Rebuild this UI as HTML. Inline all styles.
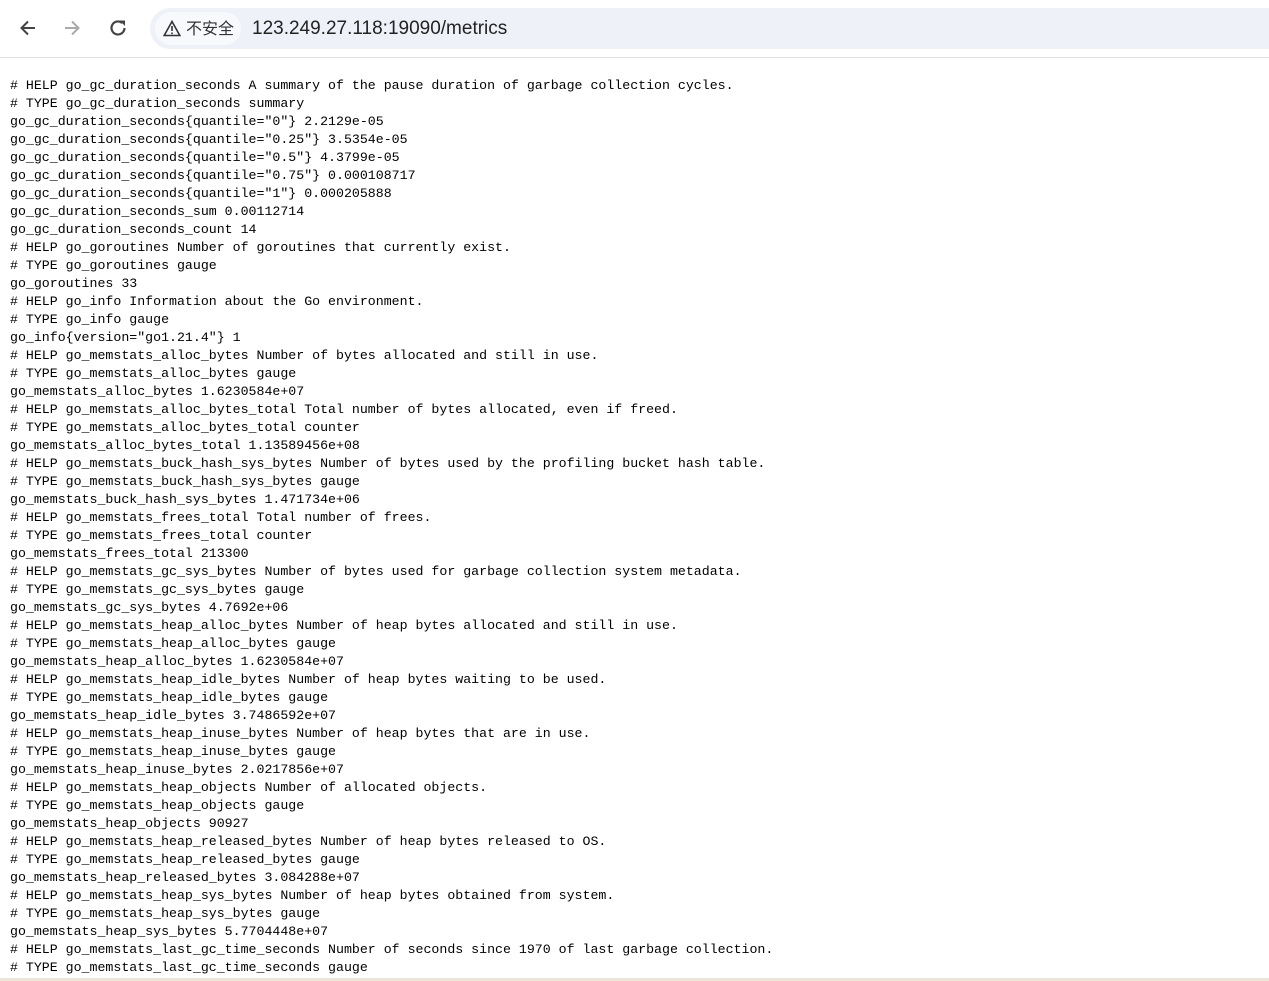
<!DOCTYPE html>
<html><head><meta charset="utf-8"><style>
html,body{margin:0;padding:0;width:1269px;height:981px;overflow:hidden;background:#fff;}
.bar{position:absolute;left:0;top:0;width:1269px;height:57px;background:#fff;border-bottom:1px solid #e3e3e3;}
.omni{position:absolute;left:150px;top:8px;width:1140px;height:41px;border-radius:21px;background:#eef1f8;}
.chip{position:absolute;left:155px;top:12px;width:86px;height:33px;border-radius:17px;background:#f8f9fd;font:16px "Liberation Sans","Noto Sans CJK SC",sans-serif;color:#333;line-height:35px;}
.url{position:absolute;left:252px;top:18px;font:19px "Liberation Sans",sans-serif;color:#222;line-height:22px;}
.content{position:absolute;left:0;top:58px;width:1269px;height:920px;overflow:hidden;}
pre{margin:0;position:absolute;left:10px;top:19px;font:13.25px/18px "Liberation Mono","Noto Sans CJK SC",monospace;color:#000;}
.bot{position:absolute;left:0;top:978px;width:1269px;height:3px;background:#ede6d8;}
</style></head><body>
<div class="bar">
<svg style="position:absolute;left:18px;top:18px" width="20" height="20" viewBox="0 0 20 20"><path d="M17 10H4M10 3.5L3.5 10 10 16.5" fill="none" stroke="#444" stroke-width="2"/></svg>
<svg style="position:absolute;left:62px;top:18px" width="20" height="20" viewBox="0 0 20 20"><path d="M3 10H16M10 3.5L16.5 10 10 16.5" fill="none" stroke="#aaa" stroke-width="2"/></svg>
<svg style="position:absolute;left:107px;top:17px" width="22" height="22" viewBox="0 0 22 22"><path d="M17.5 11A6.5 6.5 0 1 1 15.2 6" fill="none" stroke="#444" stroke-width="2.2"/><path d="M12.5 3.5H18V9z" fill="#444"/></svg>
<div class="omni"></div>
<div class="chip"><svg style="position:absolute;left:8px;top:8px" width="18" height="17" viewBox="0 0 18 17"><path d="M9 1.5L16.8 15.5H1.2z" fill="none" stroke="#333" stroke-width="1.6"/><path d="M9 6v5M9 12.5v1.6" stroke="#333" stroke-width="1.6"/></svg><span style="position:absolute;left:31px;top:0">不安全</span></div>
<div class="url">123.249.27.118:19090/metrics</div>
</div>
<div class="content"><pre># HELP go_gc_duration_seconds A summary of the pause duration of garbage collection cycles.
# TYPE go_gc_duration_seconds summary
go_gc_duration_seconds{quantile="0"} 2.2129e-05
go_gc_duration_seconds{quantile="0.25"} 3.5354e-05
go_gc_duration_seconds{quantile="0.5"} 4.3799e-05
go_gc_duration_seconds{quantile="0.75"} 0.000108717
go_gc_duration_seconds{quantile="1"} 0.000205888
go_gc_duration_seconds_sum 0.00112714
go_gc_duration_seconds_count 14
# HELP go_goroutines Number of goroutines that currently exist.
# TYPE go_goroutines gauge
go_goroutines 33
# HELP go_info Information about the Go environment.
# TYPE go_info gauge
go_info{version="go1.21.4"} 1
# HELP go_memstats_alloc_bytes Number of bytes allocated and still in use.
# TYPE go_memstats_alloc_bytes gauge
go_memstats_alloc_bytes 1.6230584e+07
# HELP go_memstats_alloc_bytes_total Total number of bytes allocated, even if freed.
# TYPE go_memstats_alloc_bytes_total counter
go_memstats_alloc_bytes_total 1.13589456e+08
# HELP go_memstats_buck_hash_sys_bytes Number of bytes used by the profiling bucket hash table.
# TYPE go_memstats_buck_hash_sys_bytes gauge
go_memstats_buck_hash_sys_bytes 1.471734e+06
# HELP go_memstats_frees_total Total number of frees.
# TYPE go_memstats_frees_total counter
go_memstats_frees_total 213300
# HELP go_memstats_gc_sys_bytes Number of bytes used for garbage collection system metadata.
# TYPE go_memstats_gc_sys_bytes gauge
go_memstats_gc_sys_bytes 4.7692e+06
# HELP go_memstats_heap_alloc_bytes Number of heap bytes allocated and still in use.
# TYPE go_memstats_heap_alloc_bytes gauge
go_memstats_heap_alloc_bytes 1.6230584e+07
# HELP go_memstats_heap_idle_bytes Number of heap bytes waiting to be used.
# TYPE go_memstats_heap_idle_bytes gauge
go_memstats_heap_idle_bytes 3.7486592e+07
# HELP go_memstats_heap_inuse_bytes Number of heap bytes that are in use.
# TYPE go_memstats_heap_inuse_bytes gauge
go_memstats_heap_inuse_bytes 2.0217856e+07
# HELP go_memstats_heap_objects Number of allocated objects.
# TYPE go_memstats_heap_objects gauge
go_memstats_heap_objects 90927
# HELP go_memstats_heap_released_bytes Number of heap bytes released to OS.
# TYPE go_memstats_heap_released_bytes gauge
go_memstats_heap_released_bytes 3.084288e+07
# HELP go_memstats_heap_sys_bytes Number of heap bytes obtained from system.
# TYPE go_memstats_heap_sys_bytes gauge
go_memstats_heap_sys_bytes 5.7704448e+07
# HELP go_memstats_last_gc_time_seconds Number of seconds since 1970 of last garbage collection.
# TYPE go_memstats_last_gc_time_seconds gauge
go_memstats_last_gc_time_seconds 1.7051770114517e+09</pre></div>
<div class="bot"></div>
</body></html>
